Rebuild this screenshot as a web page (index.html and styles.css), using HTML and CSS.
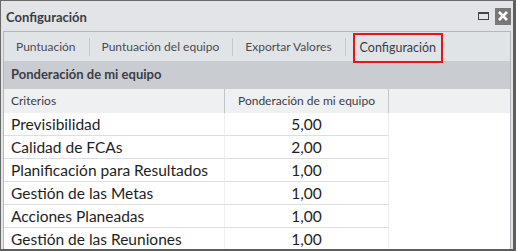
FILE: index.html
```html
<!DOCTYPE html>
<html lang="es">
<head>
    <meta charset="UTF-8">
    <title>Configuración</title>
    <link rel="stylesheet" href="styles.css">
</head>
<body>
    <div class="window">
        <div class="titlebar">
            <span class="title">Configuración</span>
            <div class="controls">
                <span class="btn-max"></span>
                <span class="btn-close">
                    <svg width="16" height="16" viewBox="0 0 16 16">
                        <path d="M4 4 L12 12 M12 4 L4 12" stroke="#fff" stroke-width="2.6" fill="none"/>
                    </svg>
                </span>
            </div>
        </div>
        <div class="panel">
            <div class="tabs">
                <span class="tab">Puntuación</span>
                <span class="sep"></span>
                <span class="tab">Puntuación del equipo</span>
                <span class="sep"></span>
                <span class="tab">Exportar Valores</span>
                <span class="sep"></span>
                <span class="tab active">Configuración</span>
            </div>
            <div class="section-title">Ponderación de mi equipo</div>
            <div class="grid">
                <div class="row head">
                    <div class="cell">Criterios</div>
                    <div class="cell num">Ponderación de mi equipo</div>
                    <div class="cell blank"></div>
                </div>
                <div class="row">
                    <div class="cell">Previsibilidad</div>
                    <div class="cell num">5,00</div>
                    <div class="cell blank"></div>
                </div>
                <div class="row">
                    <div class="cell">Calidad de FCAs</div>
                    <div class="cell num">2,00</div>
                    <div class="cell blank"></div>
                </div>
                <div class="row">
                    <div class="cell">Planificación para Resultados</div>
                    <div class="cell num">1,00</div>
                    <div class="cell blank"></div>
                </div>
                <div class="row">
                    <div class="cell">Gestión de las Metas</div>
                    <div class="cell num">1,00</div>
                    <div class="cell blank"></div>
                </div>
                <div class="row">
                    <div class="cell">Acciones Planeadas</div>
                    <div class="cell num">1,00</div>
                    <div class="cell blank"></div>
                </div>
                <div class="row">
                    <div class="cell">Gestión de las Reuniones</div>
                    <div class="cell num">1,00</div>
                    <div class="cell blank"></div>
                </div>
            </div>
        </div>
    </div>
</body>
</html>
```

FILE: styles.css
```css
* {
    box-sizing: border-box;
    margin: 0;
    padding: 0;
}

body {
    font-family: 'Segoe UI', 'Lato', 'Noto Sans', sans-serif;
    background: #fff;
    color: #333;
}

.window {
    width: 516px;
    height: 251px;
    background: #e2e4e7;
    border-top: 1px solid #6a6a6a;
    border-left: 1px solid #6a6a6a;
    border-right: 3px solid #5e5e5e;
    border-bottom: 2px solid #5e5e5e;
    overflow: hidden;
}

.titlebar {
    height: 30px;
    display: flex;
    align-items: center;
    padding-left: 5px;
}

.title {
    font-size: 13px;
    font-weight: 700;
    color: #3c3c46;
    position: relative;
    top: 1px;
}

.controls {
    margin-left: auto;
    display: flex;
    align-items: center;
    gap: 6px;
    margin-right: 2px;
}

.btn-max {
    width: 11px;
    height: 8px;
    border: 1px solid #444;
    border-top-width: 2px;
}

.btn-close {
    width: 16px;
    height: 17px;
    background: #777;
    display: flex;
    align-items: center;
    justify-content: center;
}

/* panel interior */
.panel {
    margin: 0 2px;
    border: 1px solid #b4b8bd;
    border-bottom: none;
    background: #fff;
    height: 220px;
}

.tabs {
    height: 29px;
    background: #e1e4e7;
    display: flex;
    align-items: center;
    padding-left: 12px;
    font-size: 12px;
    color: #4a4a52;
}

.sep {
    width: 1px;
    height: 18px;
    background: #c3c6ca;
    margin: 0 12px 0 13px;
}

.tab.active {
    border: 2px solid #e8141c;
    height: 30px;
    line-height: 26px;
    padding: 0 5px;
    margin-left: -5px;
    margin-top: 2px;
    color: #3c3c46;
    font-size: 12.5px;
}

.section-title {
    height: 28px;
    background: #c9cdd1;
    font-size: 13px;
    font-weight: 700;
    color: #3c3c46;
    padding-left: 7px;
    line-height: 27px;
}

.grid {
    display: flex;
    flex-direction: column;
}

.row {
    display: grid;
    grid-template-columns: 221px 164px 1fr;
    height: 23px;
}

.cell {
    font-size: 15.5px;
    color: #1e1e24;
    padding-left: 7px;
    line-height: 22px;
    border-bottom: 1px solid #dcdee1;
    border-right: 1px solid #eceef0;
    white-space: nowrap;
}

.cell.num {
    text-align: center;
    padding-left: 0;
}

.cell.blank {
    border: none;
}

.row.head {
    height: 24px;
    background: #eff0f2;
}

.row.head .cell {
    font-size: 12px;
    color: #3c3c46;
    line-height: 24px;
    border-bottom: none;
    border-right: 1px solid #c2c5c9;
}

.row.head .cell.blank {
    border: none;
}
```
